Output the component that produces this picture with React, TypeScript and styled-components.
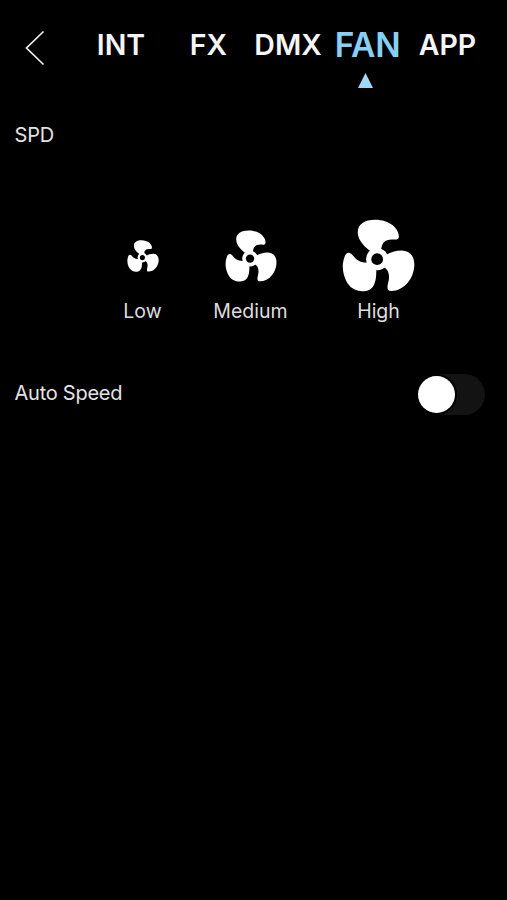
import React, { useState } from "react";
import styled, { createGlobalStyle } from "styled-components";

const GlobalStyle = createGlobalStyle`
  * { box-sizing: border-box; }
  body { margin: 0; background: #000; }
`;

const Screen = styled.main`
  display: flex;
  flex-direction: column;
  width: 507px;
  height: 900px;
  overflow: hidden;
  background: #000;
  color: #e4e4e4;
  font-family: Inter, "Liberation Sans", sans-serif;
`;

const Header = styled.header`
  display: flex;
  height: 100px;
  padding-top: 24px;
`;

const BackButton = styled.button`
  display: flex;
  align-items: flex-start;
  width: 81px;
  height: 48px;
  padding: 6px 0 0 24px;
  border: 0;
  background: none;
`;

const Tabs = styled.nav`
  display: flex;
`;

const Tab = styled.button<{ $width: number; $active: boolean }>`
  display: flex;
  flex-direction: column;
  align-items: center;
  width: ${(p) => p.$width}px;
  padding: 0;
  border: 0;
  background: none;
  color: ${(p) => (p.$active ? "#86d0f6" : "#f5f5f5")};
  font-family: inherit;
  font-size: ${(p) => (p.$active ? 33.5 : 28.5)}px;
  font-weight: 600;
  letter-spacing: ${(p) => (p.$active ? -0.3 : 0)}px;
  line-height: 42px;
  white-space: nowrap;
`;

const Marker = styled.svg`
  display: block;
  margin: 7px 5px 0 0;
`;

const SectionTitle = styled.h2`
  margin: 20px 0 0 14.5px;
  font-size: 20px;
  font-weight: 400;
  line-height: 30px;
  letter-spacing: -0.2px;
`;

const Speeds = styled.section`
  display: flex;
  height: 176px;
  margin-top: 60px;
  padding-left: 92px;
`;

const Speed = styled.button<{ $width: number }>`
  display: flex;
  flex-direction: column;
  align-items: center;
  width: ${(p) => p.$width}px;
  height: 120px;
  padding: 0;
  border: 0;
  background: none;
  color: #dedede;
  font-family: inherit;
`;

const FanSlot = styled.span`
  display: flex;
  align-items: center;
  justify-content: center;
  height: 91px;
`;

const SpeedLabel = styled.span`
  font-size: 19.5px;
  line-height: 20px;
`;

const SettingRow = styled.div`
  display: flex;
  align-items: center;
  justify-content: space-between;
  height: 42px;
  margin-top: -13px;
  padding: 0 22px 0 14.5px;
  font-size: 20px;
`;

const SettingName = styled.span`
  padding-bottom: 3px;
  letter-spacing: -0.25px;
`;

const Toggle = styled.button<{ $on: boolean }>`
  display: flex;
  align-items: center;
  justify-content: ${(p) => (p.$on ? "flex-end" : "flex-start")};
  width: 68px;
  height: 41px;
  padding: 0 1px;
  border: 0;
  border-radius: 21px;
  background: ${(p) => (p.$on ? "#86d0f6" : "#131313")};
`;

const Knob = styled.span`
  width: 37px;
  height: 37px;
  border-radius: 50%;
  background: #fff;
  box-shadow: 0 0 0 2px #000;
`;

const FanIcon = ({ size }: { size: number }) => (
  <svg width={size} height={size} viewBox="22 27 218 218" fill="#fff">
    <path d="M108 124C82 105 69 86 69 66C69 42 90 29 121 29C164 29 192 55 192 79C192 89 184 89 173 88C151 87 139 98 139 122Z" />
    <path d="M150 136C168 126 182 121 200 121C225 121 238 139 238 163C238 204 207 242 169 242C153 242 158 226 161 213C165 193 161 178 144 169Z" />
    <path d="M105 156C80 160 66 151 54 135C46 124 35 125 30 139C21 162 23 187 34 211C44 233 63 243 84 243C112 243 127 225 124 170Z" />
    <circle cx="127" cy="147" r="33" />
    <circle cx="127" cy="147" r="17.5" fill="#000" />
  </svg>
);

const tabs = [
  { name: "INT", width: 80 },
  { name: "FX", width: 95 },
  { name: "DMX", width: 64 },
  { name: "FAN", width: 95 },
  { name: "APP", width: 65 },
];

const speeds = [
  { name: "Low", size: 32, width: 101 },
  { name: "Medium", size: 52, width: 115 },
  { name: "High", size: 73, width: 141 },
];

export default function App() {
  const [active, setActive] = useState("FAN");
  const [auto, setAuto] = useState(false);
  return (
    <Screen>
      <GlobalStyle />
      <Header>
        <BackButton aria-label="Back">
          <svg width="22" height="36" viewBox="0 0 22 36" fill="none" stroke="#f0f0f0" strokeWidth="1.7">
            <path d="M19.5 1.5L2.5 18L19.5 34.5" />
          </svg>
        </BackButton>
        <Tabs>
          {tabs.map((t) => (
            <Tab key={t.name} $width={t.width} $active={t.name === active} onClick={() => setActive(t.name)}>
              {t.name}
              {t.name === active && (
                <Marker width="15" height="15" viewBox="0 0 15 15" fill="#a2d7f7">
                  <path d="M7.5 0L15 15H0Z" />
                </Marker>
              )}
            </Tab>
          ))}
        </Tabs>
      </Header>
      <SectionTitle>SPD</SectionTitle>
      <Speeds>
        {speeds.map((s) => (
          <Speed key={s.name} $width={s.width}>
            <FanSlot>
              <FanIcon size={s.size} />
            </FanSlot>
            <SpeedLabel>{s.name}</SpeedLabel>
          </Speed>
        ))}
      </Speeds>
      <SettingRow>
        <SettingName>Auto Speed</SettingName>
        <Toggle role="switch" aria-checked={auto} aria-label="Auto Speed" $on={auto} onClick={() => setAuto(!auto)}>
          <Knob />
        </Toggle>
      </SettingRow>
    </Screen>
  );
}
